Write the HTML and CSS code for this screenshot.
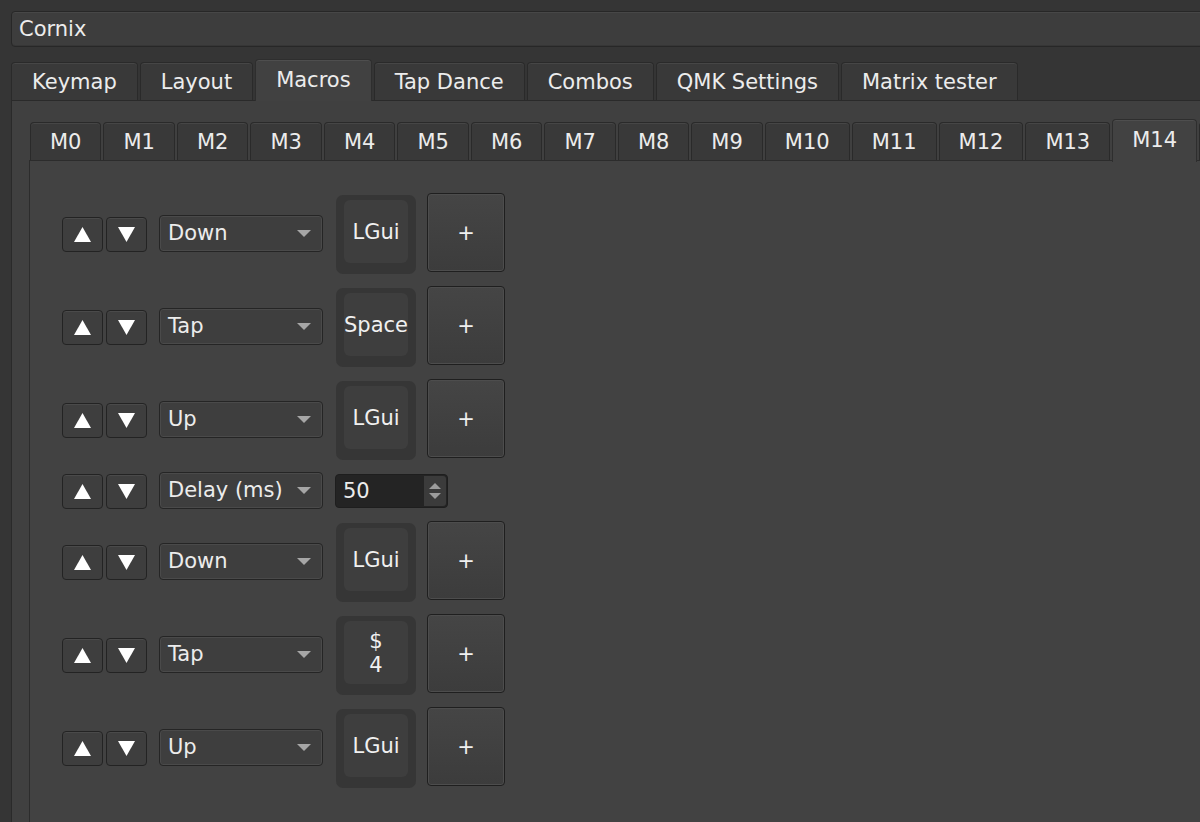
FILE: index.html
```html
<!DOCTYPE html>
<html>
<head>
    <title>Vial - Macros</title>
    <meta name="viewport" content="width=device-width, initial-scale=1">
    <link rel="stylesheet" href="styles.css">
</head>
<body>
<div class="app">
    <!-- Device picker -->
    <div class="device">Cornix</div>

    <!-- Main tabs -->
    <div class="tabbar">
        <div class="tab">Keymap</div>
        <div class="tab">Layout</div>
        <div class="tab active">Macros</div>
        <div class="tab">Tap Dance</div>
        <div class="tab">Combos</div>
        <div class="tab">QMK Settings</div>
        <div class="tab">Matrix tester</div>
    </div>

    <div class="pane">
        <!-- Macro slots -->
        <div class="subbar">
            <div class="subtab">M0</div>
            <div class="subtab">M1</div>
            <div class="subtab">M2</div>
            <div class="subtab">M3</div>
            <div class="subtab">M4</div>
            <div class="subtab">M5</div>
            <div class="subtab">M6</div>
            <div class="subtab">M7</div>
            <div class="subtab">M8</div>
            <div class="subtab">M9</div>
            <div class="subtab">M10</div>
            <div class="subtab">M11</div>
            <div class="subtab">M12</div>
            <div class="subtab">M13</div>
            <div class="subtab active">M14</div>
            <div class="subtab"></div>
        </div>

        <div class="subpane">
            <div class="row">
                <div class="moves">
                    <button class="move"><svg width="17" height="15" viewBox="0 0 17 15"><polygon points="8.5,0 17,15 0,15" /></svg></button>
                    <button class="move"><svg width="17" height="15" viewBox="0 0 17 15"><polygon points="0,0 17,0 8.5,15" /></svg></button>
                </div>
                <div class="combo">Down<span class="caret"></span></div>
                <div class="key"><div class="keycap">LGui</div></div>
                <button class="add">+</button>
            </div>

            <div class="row">
                <div class="moves">
                    <button class="move"><svg width="17" height="15" viewBox="0 0 17 15"><polygon points="8.5,0 17,15 0,15" /></svg></button>
                    <button class="move"><svg width="17" height="15" viewBox="0 0 17 15"><polygon points="0,0 17,0 8.5,15" /></svg></button>
                </div>
                <div class="combo">Tap<span class="caret"></span></div>
                <div class="key"><div class="keycap">Space</div></div>
                <button class="add">+</button>
            </div>

            <div class="row">
                <div class="moves">
                    <button class="move"><svg width="17" height="15" viewBox="0 0 17 15"><polygon points="8.5,0 17,15 0,15" /></svg></button>
                    <button class="move"><svg width="17" height="15" viewBox="0 0 17 15"><polygon points="0,0 17,0 8.5,15" /></svg></button>
                </div>
                <div class="combo">Up<span class="caret"></span></div>
                <div class="key"><div class="keycap">LGui</div></div>
                <button class="add">+</button>
            </div>

            <div class="row short">
                <div class="moves">
                    <button class="move"><svg width="17" height="15" viewBox="0 0 17 15"><polygon points="8.5,0 17,15 0,15" /></svg></button>
                    <button class="move"><svg width="17" height="15" viewBox="0 0 17 15"><polygon points="0,0 17,0 8.5,15" /></svg></button>
                </div>
                <div class="combo">Delay (ms)<span class="caret"></span></div>
                <div class="spin">
                    <span class="spin-value">50</span>
                    <span class="spin-arrows">
                        <svg width="12" height="6" viewBox="0 0 12 6"><polygon points="6,0 12,6 0,6" /></svg>
                        <svg width="12" height="6" viewBox="0 0 12 6"><polygon points="0,0 12,0 6,6" /></svg>
                    </span>
                </div>
            </div>

            <div class="row">
                <div class="moves">
                    <button class="move"><svg width="17" height="15" viewBox="0 0 17 15"><polygon points="8.5,0 17,15 0,15" /></svg></button>
                    <button class="move"><svg width="17" height="15" viewBox="0 0 17 15"><polygon points="0,0 17,0 8.5,15" /></svg></button>
                </div>
                <div class="combo">Down<span class="caret"></span></div>
                <div class="key"><div class="keycap">LGui</div></div>
                <button class="add">+</button>
            </div>

            <div class="row">
                <div class="moves">
                    <button class="move"><svg width="17" height="15" viewBox="0 0 17 15"><polygon points="8.5,0 17,15 0,15" /></svg></button>
                    <button class="move"><svg width="17" height="15" viewBox="0 0 17 15"><polygon points="0,0 17,0 8.5,15" /></svg></button>
                </div>
                <div class="combo">Tap<span class="caret"></span></div>
                <div class="key"><div class="keycap two">$<br>4</div></div>
                <button class="add">+</button>
            </div>

            <div class="row">
                <div class="moves">
                    <button class="move"><svg width="17" height="15" viewBox="0 0 17 15"><polygon points="8.5,0 17,15 0,15" /></svg></button>
                    <button class="move"><svg width="17" height="15" viewBox="0 0 17 15"><polygon points="0,0 17,0 8.5,15" /></svg></button>
                </div>
                <div class="combo">Up<span class="caret"></span></div>
                <div class="key"><div class="keycap">LGui</div></div>
                <button class="add">+</button>
            </div>
        </div>
    </div>
</div>
</body>
</html>
```

FILE: styles.css
```css
/* Base */
* {
    box-sizing: border-box;
}

body, html {
    height: 100%;
    margin: 0;
    background-color: #353535;
    color: #ececec;
    font-family: 'DejaVu Sans', 'Liberation Sans', sans-serif;
    font-size: 21px;
    overflow: hidden;
}

.app {
    height: calc(100% + 30px);
    padding: 11px 0 0 11px;
    display: flex;
    flex-direction: column;
    margin-right: -30px;
}

/* Device selector */
.device {
    height: 36px;
    line-height: 34px;
    padding-left: 7px;
    background-color: #3d3d3d;
    border: 1px solid #272727;
    border-radius: 4px;
    box-shadow: inset 0 1px 0 #474747, inset 0 -1px 0 #363636;
}

/* Main tabs */
.tabbar {
    display: flex;
    align-items: flex-end;
    gap: 2px;
    margin-top: 12px;
    height: 41px;
}

.tab {
    flex-shrink: 0;
    height: 38px;
    line-height: 38px;
    padding: 0 20px;
    background-color: #393939;
    border: 1px solid #2a2a2a;
    border-bottom: none;
    border-radius: 4px 4px 0 0;
    box-shadow: inset 0 1px 0 #464646;
}

.tab.active {
    position: relative;
    height: 42px;
    line-height: 40px;
    margin-bottom: -1px;
    background-color: #414141;
    border-color: #2e2e2e;
    box-shadow: inset 0 1px 0 #4e4e4e;
}

.pane {
    flex: 1;
    display: flex;
    flex-direction: column;
    background-color: #404040;
    border: 1px solid #2a2a2a;
    padding: 18px 0 0 17px;
}

/* Macro slot tabs */
.subbar {
    display: flex;
    align-items: flex-end;
    gap: 2px;
    height: 41px;
    padding-left: 1px;
}

.subtab {
    flex-shrink: 0;
    height: 38px;
    min-width: 60px;
    line-height: 38px;
    padding: 0 19px;
    background-color: #393939;
    border: 1px solid #2a2a2a;
    border-bottom: none;
    border-radius: 4px 4px 0 0;
    box-shadow: inset 0 1px 0 #464646;
}

.subtab.active {
    position: relative;
    height: 43px;
    line-height: 40px;
    margin-bottom: -2px;
    background-color: #424242;
    border-color: #2e2e2e;
    box-shadow: inset 0 1px 0 #4e4e4e;
}

.subpane {
    flex: 1;
    background-color: #424242;
    border: 1px solid #2c2c2c;
    padding: 32px 0 0 32px;
    display: flex;
    flex-direction: column;
    gap: 13px;
}

/* Macro action rows */
.row {
    display: flex;
    align-items: center;
    height: 80px;
}

.row.short {
    height: 36px;
}

.moves {
    display: flex;
    gap: 3px;
    margin-right: 12px;
    margin-top: 2px;
}

.move {
    width: 41px;
    height: 35px;
    padding: 0;
    display: flex;
    align-items: center;
    justify-content: center;
    background-color: #3e3e3e;
    border: 1px solid #232323;
    border-radius: 4px;
    box-shadow: inset 0 1px 0 #4a4a4a;
}

.move svg {
    fill: #ffffff;
    margin-top: 1px;
}

.combo {
    position: relative;
    width: 164px;
    height: 37px;
    line-height: 35px;
    padding-left: 8px;
    background-color: #3e3e3e;
    border: 1px solid #252525;
    border-radius: 4px;
    box-shadow: inset 0 0 0 1px #4a4a4a;
    margin-right: 13px;
}

.caret {
    position: absolute;
    right: 11px;
    top: 14px;
    width: 0;
    height: 0;
    border-left: 7px solid transparent;
    border-right: 7px solid transparent;
    border-top: 7px solid #a6a6a6;
}

.key {
    width: 80px;
    height: 79px;
    padding: 5px 8px 11px 8px;
    background-color: #363636;
    border-radius: 7px;
    margin-right: 11px;
    margin-top: 3px;
}

.keycap {
    height: 100%;
    display: flex;
    align-items: center;
    justify-content: center;
    text-align: center;
    background-color: #3e3e3e;
    border-radius: 6px;
    color: #f0f0f0;
}

.keycap.two {
    line-height: 24px;
}

.add {
    width: 78px;
    height: 79px;
    padding: 0;
    font-family: 'DejaVu Sans', sans-serif;
    font-size: 21px;
    color: #f0f0f0;
    background: linear-gradient(#454545, #3c3c3c);
    border: 1px solid #1f1f1f;
    border-radius: 4px;
    box-shadow: inset 0 0 0 1px #4d4d4d;
    margin-top: -1px;
}

/* Delay spin box */
.spin {
    display: flex;
    width: 113px;
    height: 34px;
    margin-left: -1px;
    margin-top: 2px;
    background-color: #242424;
    border: 1px solid #1e1e1e;
    border-radius: 4px;
    padding: 1px;
}

.spin-value {
    flex: 1;
    line-height: 30px;
    padding-left: 6px;
}

.spin-arrows {
    width: 22px;
    display: flex;
    flex-direction: column;
    align-items: center;
    justify-content: center;
    gap: 4px;
    background-color: #3b3b3b;
    border-radius: 0 3px 3px 0;
}

.spin-arrows svg {
    fill: #9c9c9c;
}
```
